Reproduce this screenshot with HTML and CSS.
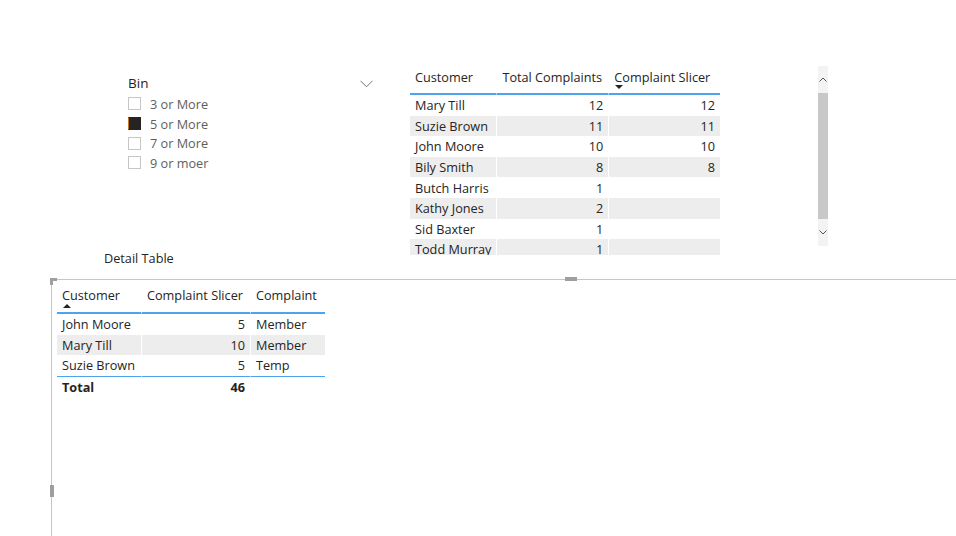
FILE: index.html
```html
<!DOCTYPE html>
<html>
<head>
<meta charset="utf-8">
<link rel="stylesheet" href="styles.css">
</head>
<body>
<div class="page">
  <div class="top">
    <div class="slicer">
      <div class="slicer-head">
        <span class="slicer-title">Bin</span>
        <svg class="chev" width="13" height="8" viewBox="0 0 13 8"><path d="M0.5 0.8 L6.5 6.8 L12.5 0.8" fill="none" stroke="#7a7876" stroke-width="1"/></svg>
      </div>
      <div class="item"><span class="box"></span><span>3 or More</span></div>
      <div class="item"><span class="box checked"></span><span>5 or More</span></div>
      <div class="item"><span class="box"></span><span>7 or More</span></div>
      <div class="item"><span class="box"></span><span>9 or moer</span></div>
    </div>

    <div class="t1wrap">
      <table class="grid t1">
        <colgroup><col style="width:87px"><col style="width:112px"><col style="width:111px"></colgroup>
        <thead>
          <tr>
            <th class="l">Customer</th>
            <th class="l">Total Complaints</th>
            <th class="l sorted">Complaint Slicer<span class="arrow down"></span></th>
          </tr>
        </thead>
        <tbody>
          <tr><td>Mary Till</td><td class="n">12</td><td class="n">12</td></tr>
          <tr class="alt"><td>Suzie Brown</td><td class="n">11</td><td class="n">11</td></tr>
          <tr><td>John Moore</td><td class="n">10</td><td class="n">10</td></tr>
          <tr class="alt"><td>Bily Smith</td><td class="n">8</td><td class="n">8</td></tr>
          <tr><td>Butch Harris</td><td class="n">1</td><td class="n"></td></tr>
          <tr class="alt"><td>Kathy Jones</td><td class="n">2</td><td class="n"></td></tr>
          <tr><td>Sid Baxter</td><td class="n">1</td><td class="n"></td></tr>
          <tr class="alt"><td>Todd Murray</td><td class="n">1</td><td class="n"></td></tr>
        </tbody>
      </table>
    </div>

    <div class="scroll">
      <div class="sbtn"><svg width="8" height="5" viewBox="0 0 8 5"><path d="M0.5 4.5 L4 1 L7.5 4.5" fill="none" stroke="#555" stroke-width="1"/></svg></div>
      <div class="thumb"></div>
      <div class="sbtn"><svg width="8" height="5" viewBox="0 0 8 5"><path d="M0.5 0.5 L4 4 L7.5 0.5" fill="none" stroke="#555" stroke-width="1"/></svg></div>
    </div>
  </div>

  <div class="detail-title">Detail Table</div>

  <div class="frame">
    <span class="corner"></span>
    <span class="hhandle"></span>
    <span class="vhandle"></span>
    <table class="grid t2">
      <colgroup><col style="width:85px"><col style="width:109px"><col style="width:74px"></colgroup>
      <thead>
        <tr>
          <th class="l sorted">Customer<span class="arrow up"></span></th>
          <th class="l">Complaint Slicer</th>
          <th class="l">Complaint</th>
        </tr>
      </thead>
      <tbody>
        <tr><td>John Moore</td><td class="n">5</td><td>Member</td></tr>
        <tr class="alt"><td>Mary Till</td><td class="n">10</td><td>Member</td></tr>
        <tr class="last"><td>Suzie Brown</td><td class="n">5</td><td>Temp</td></tr>
        <tr class="total"><td>Total</td><td class="n">46</td><td></td></tr>
      </tbody>
    </table>
  </div>
</div>
</body>
</html>
```

FILE: styles.css
```css
html, body {
  margin: 0;
  padding: 0;
  background: #ffffff;
}
body {
  font-family: "Open Sans", "Noto Sans", sans-serif;
  font-size: 12.7px;
  color: #252423;
}
.page {
  width: 956px;
  height: 536px;
  overflow: hidden;
  position: relative;
}
.top {
  display: flex;
  align-items: flex-start;
  padding-top: 66px;
  height: 183px;
}
.slicer {
  margin-left: 128px;
  margin-top: 7px;
  width: 245px;
}
.slicer-head {
  display: flex;
  justify-content: space-between;
  align-items: center;
  height: 20px;
  margin-bottom: 1px;
}
.slicer-title {
  font-size: 13.5px;
  color: #252423;
}
.chev {
  margin-top: 2px;
}
.item {
  display: flex;
  align-items: center;
  height: 19.7px;
  color: #605e5c;
  font-size: 12.7px;
}
.box {
  width: 11px;
  height: 11px;
  border: 1px solid #c8c6c4;
  margin-right: 9px;
  background: #fff;
}
.box.checked {
  background: #252423;
  border-color: #252423;
  border-left-color: #c77a1f;
}
.t1wrap {
  margin-left: 37px;
  width: 310px;
  height: 189px;
  overflow: hidden;
  flex: none;
}
.grid {
  border-collapse: separate;
  border-spacing: 0;
  table-layout: fixed;
}
.grid th, .grid td {
  padding: 0 5px;
  white-space: nowrap;
  overflow: hidden;
  border-right: 1px solid #ffffff;
}
.grid th:last-child, .grid td:last-child {
  border-right: 0;
}
.grid th {
  font-weight: normal;
  text-align: left;
  vertical-align: top;
  border-bottom: 2px solid #4ea4ec;
  position: relative;
}
.t1 th {
  height: 26px;
  padding-top: 1px;
  line-height: 20px;
}
.grid td {
  height: 20.6px;
  line-height: 20px;
  padding-top: 0;
  padding-bottom: 0;
}
.grid tr.alt td {
  background: #ededed;
}
.grid td.n {
  text-align: right;
}
.arrow {
  position: absolute;
  width: 0;
  height: 0;
  border-left: 4px solid transparent;
  border-right: 4px solid transparent;
}
.arrow.down {
  left: 6px;
  top: 19px;
  border-top: 4px solid #252423;
}
.arrow.up {
  left: 6px;
  top: 23px;
  border-bottom: 4px solid #252423;
}
.scroll {
  margin-left: 98px;
  width: 10px;
  height: 180px;
  background: #f3f3f3;
  display: flex;
  flex-direction: column;
  flex: none;
}
.sbtn {
  height: 27px;
  display: flex;
  align-items: center;
  justify-content: center;
}
.thumb {
  flex: 1;
  background: #c8c8c8;
}
.detail-title {
  margin-left: 104px;
  height: 30px;
  line-height: 18px;
}
.frame {
  margin-left: 51px;
  border-top: 1px solid #c8c6c4;
  border-left: 1px solid #c8c6c4;
  height: 257px;
  position: relative;
  padding: 1px 0 0 5px;
}
.corner {
  position: absolute;
  left: -2px;
  top: -2px;
  width: 7px;
  height: 7px;
  border-left: 3px solid #a19f9d;
  border-top: 3px solid #a19f9d;
  box-sizing: border-box;
}
.hhandle {
  position: absolute;
  left: 513px;
  top: -3px;
  width: 12px;
  height: 4px;
  background: #a19f9d;
}
.vhandle {
  position: absolute;
  left: -2px;
  top: 205px;
  width: 4px;
  height: 12px;
  background: #a19f9d;
}
.t2 th {
  height: 27px;
  padding-top: 4px;
  line-height: 20px;
}
.t2 tr.last td {
  border-bottom: 1px solid #4ea4ec;
}
.t2 tr.total td {
  font-weight: bold;
  height: 19px;
}
```
